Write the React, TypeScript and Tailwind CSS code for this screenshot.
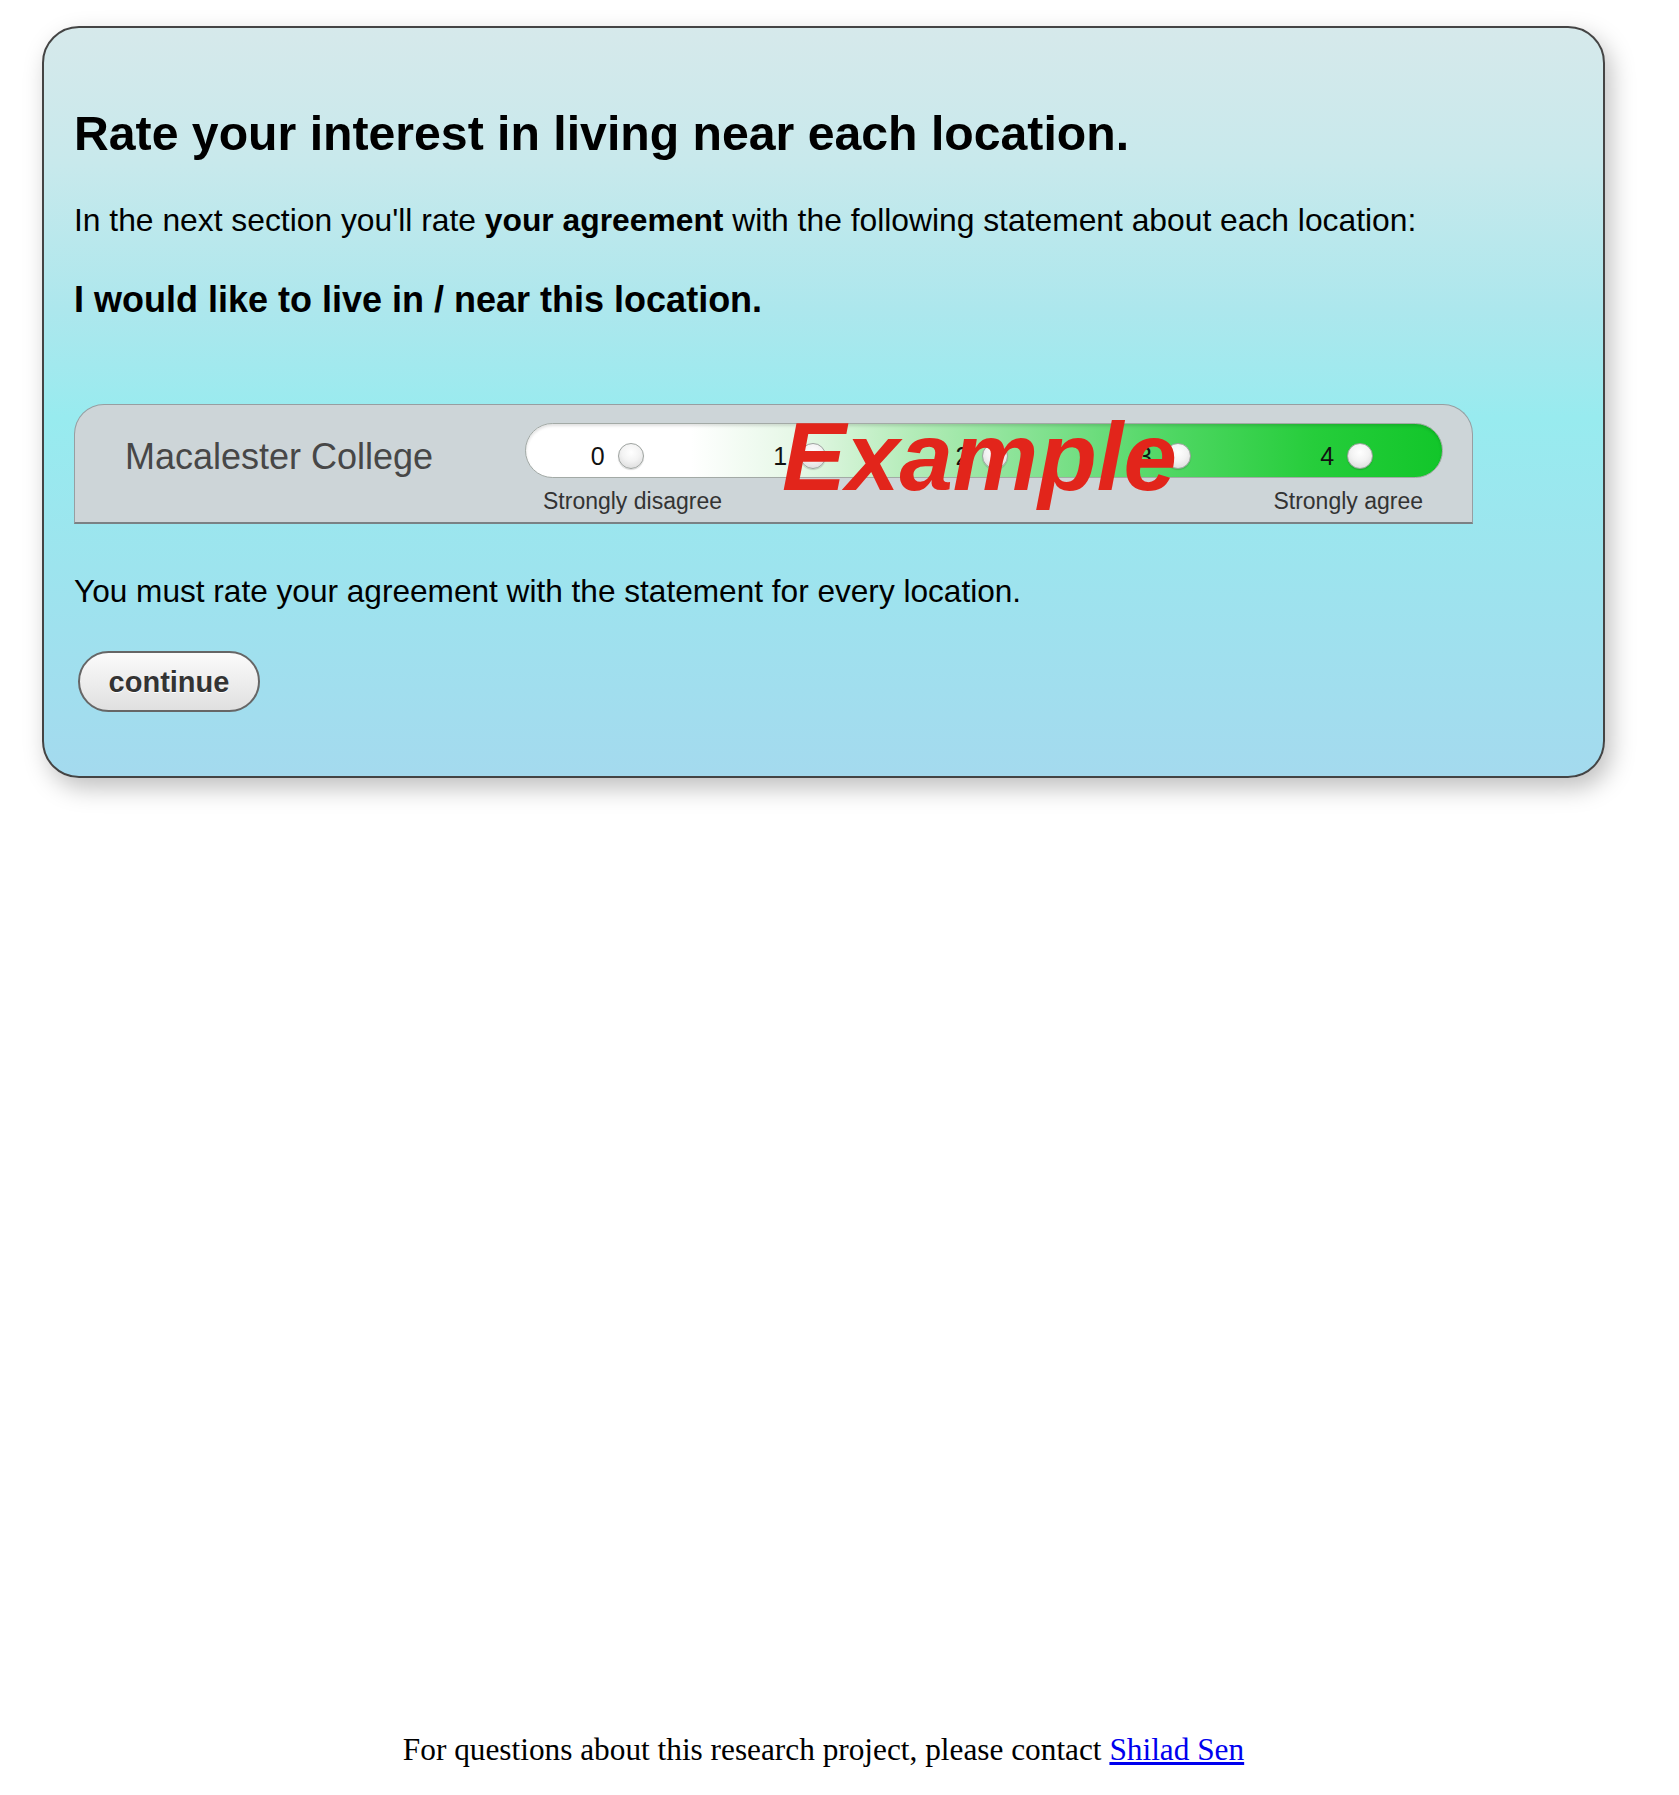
import React from "react";

function Dot() {
  return (
    <span className="block w-[26px] h-[26px] rounded-full border border-[#9ea3a0] bg-[radial-gradient(circle_at_50%_35%,#ffffff_0%,#f3f3f3_45%,#d4d4d4_100%)] shadow-[0_1px_1px_rgba(0,0,0,0.15)]" />
  );
}

function Panel() {
  const nums = [0, 1, 2, 3, 4];
  return (
    <div className="relative mt-[86px] w-[1399px] h-[120px] rounded-t-[30px] border border-[#979ea1] border-b-2 border-b-[#7b8184] bg-[#cdd5d8] flex">
      <div className="w-[450px] pl-[50px] pt-[34px] text-[36px] leading-none text-[#474747] whitespace-nowrap">
        Macalester College
      </div>
      <div className="flex flex-col pt-[18px]">
        <div className="w-[918px] h-[55px] rounded-full border border-[#a3aaa6] bg-[linear-gradient(to_right,#ffffff_0%,#ffffff_18%,#e4f7e5_30%,#b4ecb9_42%,#86e293_55%,#50d764_70%,#26cd3b_86%,#12c62a_100%)] shadow-[inset_0_2px_3px_rgba(0,0,0,0.12)] grid grid-cols-5 pr-[4px] pt-[11px] items-center">
          {nums.map((n) => (
            <div key={n} className="flex items-center justify-center gap-[13px]">
              <span className="text-[25px] leading-none text-[#111]">{n}</span>
              <Dot />
            </div>
          ))}
        </div>
        <div className="flex justify-between pl-[18px] pr-[20px] mt-[12px] text-[23px] leading-none text-[#333]">
          <span>Strongly disagree</span>
          <span>Strongly agree</span>
        </div>
      </div>
      <span className="absolute left-[707px] top-[4px] text-[96px] leading-none font-bold italic text-[#e2251b] whitespace-nowrap">
        Example
      </span>
    </div>
  );
}

export default function App() {
  return (
    <div className="min-h-[1795px] flex flex-col bg-white">
      <div className="ml-[42px] w-[1563px] flex flex-col flex-1">
        <div className="mt-[26px] rounded-[37px] border-2 border-[#444] bg-[linear-gradient(to_bottom,#d6e9eb_0%,#c8e9ec_18%,#ace7ed_38%,#98ebef_52%,#9de4ee_72%,#a4daee_100%)] shadow-[6px_10px_24px_rgba(0,0,0,0.25)] pl-[30px] pt-[81px] pb-[64px] font-['Liberation_Sans',Arial,sans-serif] text-black">
          <h1 className="text-[48.2px] leading-none font-bold whitespace-nowrap">
            Rate your interest in living near each location.
          </h1>
          <p className="mt-[48px] text-[31.8px] leading-none whitespace-nowrap">
            In the next section you'll rate <b>your agreement</b> with the following statement about each location:
          </p>
          <p className="mt-[45px] text-[36px] leading-none font-bold whitespace-nowrap">
            I would like to live in / near this location.
          </p>
          <Panel />
          <p className="mt-[52px] text-[31.6px] leading-none whitespace-nowrap">
            You must rate your agreement with the statement for every location.
          </p>
          <button className="mt-[43px] ml-[4px] w-[182px] h-[61px] pt-[2px] rounded-full border-2 border-[#666] bg-[linear-gradient(to_bottom,#fbfbfb,#e0e0e0)] flex items-center justify-center text-[29px] leading-none font-bold text-[#333] [text-shadow:0_1px_0_#fff]">
            continue
          </button>
        </div>
        <div className="flex-1" />
        <p className="pb-[30px] text-center font-['Liberation_Serif','Times_New_Roman',serif] text-[31.3px] leading-none text-black">
          For questions about this research project, please contact{" "}
          <a href="#" className="text-[#0000ee] underline">
            Shilad Sen
          </a>
        </p>
      </div>
    </div>
  );
}
